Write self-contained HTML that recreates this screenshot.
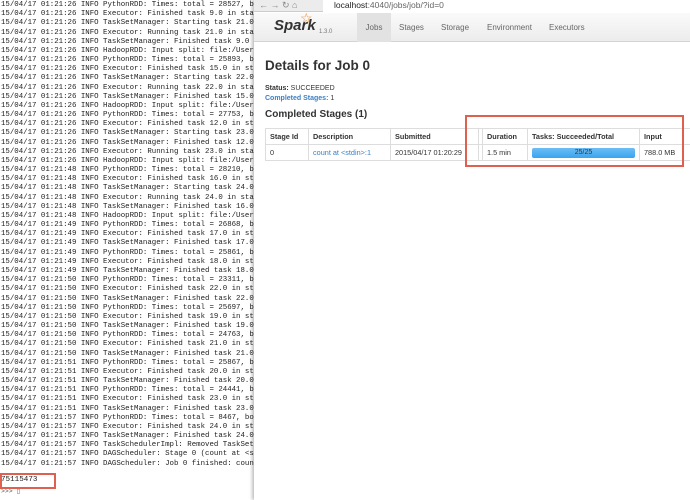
<!DOCTYPE html>
<html><head><meta charset="utf-8"><style>
*{margin:0;padding:0;box-sizing:border-box}
body{width:690px;height:500px;overflow:hidden;background:#fff;position:relative;font-family:"Liberation Sans",sans-serif}
#term{position:absolute;left:0;top:0;width:260px;height:500px;background:#fff;font-family:"Liberation Mono",monospace;font-size:7.4px;line-height:9.18px;color:#222;white-space:pre;overflow:hidden;padding:1px 0 0 1px}
#term div{height:9.18px}
.tl{position:absolute;left:1px;font-family:"Liberation Mono",monospace;font-size:7.6px;color:#222;white-space:pre}
#tbox{position:absolute;left:0;top:473px;width:56px;height:16px;border:2px solid #e06050}
#win{position:absolute;left:254px;top:0;width:436px;height:500px;background:#fff;box-shadow:-2px 0 3px rgba(0,0,0,.25)}
#tool{height:12px;background:#ececec;position:relative;border-bottom:1px solid #ccc}
#addr{position:absolute;left:69px;top:0;width:367px;height:12px;background:#fff;font-size:8.5px;line-height:11px;color:#666;padding-left:11px}
#addr b{color:#222;font-weight:normal}
#nav{position:absolute;top:13px;left:0;right:0;height:29px;background:linear-gradient(#fafafa,#ececec);border-bottom:1px solid #d4d4d4}
.tab{position:absolute;top:0;height:29px;line-height:29px;font-size:8px;color:#666}
#content{position:absolute;top:42px;left:11px;right:0}
h3{position:absolute;top:16px;font-size:13.5px;color:#333;font-weight:bold}
.s{position:absolute;font-size:7px;color:#333}
table{position:absolute;top:86px;left:0;border-collapse:collapse;font-size:7.3px;color:#333;table-layout:fixed;width:430px}
td,th{border:1px solid #ddd;height:16px;padding:0 4px;text-align:left;white-space:nowrap;overflow:hidden}
th{font-weight:bold}
#rbox{position:absolute;left:200px;top:73px;width:219px;height:52px;border:2px solid #e06050}
</style></head><body>
<div id="term"><div>15/04/17 01:21:26 INFO PythonRDD: Times: total = 28527, b</div><div>15/04/17 01:21:26 INFO Executor: Finished task 9.0 in sta</div><div>15/04/17 01:21:26 INFO TaskSetManager: Starting task 21.0</div><div>15/04/17 01:21:26 INFO Executor: Running task 21.0 in sta</div><div>15/04/17 01:21:26 INFO TaskSetManager: Finished task 9.0</div><div>15/04/17 01:21:26 INFO HadoopRDD: Input split: file:/User</div><div>15/04/17 01:21:26 INFO PythonRDD: Times: total = 25893, b</div><div>15/04/17 01:21:26 INFO Executor: Finished task 15.0 in st</div><div>15/04/17 01:21:26 INFO TaskSetManager: Starting task 22.0</div><div>15/04/17 01:21:26 INFO Executor: Running task 22.0 in sta</div><div>15/04/17 01:21:26 INFO TaskSetManager: Finished task 15.0</div><div>15/04/17 01:21:26 INFO HadoopRDD: Input split: file:/User</div><div>15/04/17 01:21:26 INFO PythonRDD: Times: total = 27753, b</div><div>15/04/17 01:21:26 INFO Executor: Finished task 12.0 in st</div><div>15/04/17 01:21:26 INFO TaskSetManager: Starting task 23.0</div><div>15/04/17 01:21:26 INFO TaskSetManager: Finished task 12.0</div><div>15/04/17 01:21:26 INFO Executor: Running task 23.0 in sta</div><div>15/04/17 01:21:26 INFO HadoopRDD: Input split: file:/User</div><div>15/04/17 01:21:48 INFO PythonRDD: Times: total = 28210, b</div><div>15/04/17 01:21:48 INFO Executor: Finished task 16.0 in st</div><div>15/04/17 01:21:48 INFO TaskSetManager: Starting task 24.0</div><div>15/04/17 01:21:48 INFO Executor: Running task 24.0 in sta</div><div>15/04/17 01:21:48 INFO TaskSetManager: Finished task 16.0</div><div>15/04/17 01:21:48 INFO HadoopRDD: Input split: file:/User</div><div>15/04/17 01:21:49 INFO PythonRDD: Times: total = 26868, b</div><div>15/04/17 01:21:49 INFO Executor: Finished task 17.0 in st</div><div>15/04/17 01:21:49 INFO TaskSetManager: Finished task 17.0</div><div>15/04/17 01:21:49 INFO PythonRDD: Times: total = 25861, b</div><div>15/04/17 01:21:49 INFO Executor: Finished task 18.0 in st</div><div>15/04/17 01:21:49 INFO TaskSetManager: Finished task 18.0</div><div>15/04/17 01:21:50 INFO PythonRDD: Times: total = 23311, b</div><div>15/04/17 01:21:50 INFO Executor: Finished task 22.0 in st</div><div>15/04/17 01:21:50 INFO TaskSetManager: Finished task 22.0</div><div>15/04/17 01:21:50 INFO PythonRDD: Times: total = 25697, b</div><div>15/04/17 01:21:50 INFO Executor: Finished task 19.0 in st</div><div>15/04/17 01:21:50 INFO TaskSetManager: Finished task 19.0</div><div>15/04/17 01:21:50 INFO PythonRDD: Times: total = 24763, b</div><div>15/04/17 01:21:50 INFO Executor: Finished task 21.0 in st</div><div>15/04/17 01:21:50 INFO TaskSetManager: Finished task 21.0</div><div>15/04/17 01:21:51 INFO PythonRDD: Times: total = 25867, b</div><div>15/04/17 01:21:51 INFO Executor: Finished task 20.0 in st</div><div>15/04/17 01:21:51 INFO TaskSetManager: Finished task 20.0</div><div>15/04/17 01:21:51 INFO PythonRDD: Times: total = 24441, b</div><div>15/04/17 01:21:51 INFO Executor: Finished task 23.0 in st</div><div>15/04/17 01:21:51 INFO TaskSetManager: Finished task 23.0</div><div>15/04/17 01:21:57 INFO PythonRDD: Times: total = 8467, bo</div><div>15/04/17 01:21:57 INFO Executor: Finished task 24.0 in st</div><div>15/04/17 01:21:57 INFO TaskSetManager: Finished task 24.0</div><div>15/04/17 01:21:57 INFO TaskSchedulerImpl: Removed TaskSet</div><div>15/04/17 01:21:57 INFO DAGScheduler: Stage 0 (count at &lt;s</div><div>15/04/17 01:21:57 INFO DAGScheduler: Job 0 finished: coun</div></div>
<div class="tl" style="top:476px">75115473</div>
<div class="tl" style="top:487px;font-size:6.5px;color:#555">&gt;&gt;&gt; &#9647;</div>
<div id="tbox"></div>
<div id="win">
 <div id="tool"><span style="position:absolute;left:5px;top:0;font-size:9px;color:#888">&#8592; &#8594; &#8635; &#8962;</span><div id="addr"><b>localhost</b>:4040/jobs/job/?id=0</div></div>
 <div id="nav">
  <div style="position:absolute;left:20px;top:4px;font-size:15px;font-style:italic;font-weight:bold;color:#333">Spark</div>
  <div style="position:absolute;left:46px;top:-3px;color:#e8892b;font-size:14px">&#9734;</div>
  <div style="position:absolute;left:65px;top:16px;font-size:6px;color:#777">1.3.0</div>
  <div class="tab" style="left:103px;width:34px;background:#e2e2e2;text-align:center">Jobs</div>
  <div class="tab" style="left:145px">Stages</div>
  <div class="tab" style="left:187px">Storage</div>
  <div class="tab" style="left:233px">Environment</div>
  <div class="tab" style="left:295px">Executors</div>
 </div>
 <div id="content">
  <h3>Details for Job 0</h3>
  <div class="s" style="top:43px"><b>Status:</b> SUCCEEDED</div>
  <div class="s" style="top:53px"><b style="color:#3b7fc4">Completed Stages:</b> 1</div>
  <div style="position:absolute;top:67px;font-size:10px;font-weight:bold;color:#333">Completed Stages (1)</div>
  <table>
   <colgroup><col style="width:43px"><col style="width:82px"><col style="width:88px"><col style="width:4px"><col style="width:45px"><col style="width:112px"><col style="width:44px"><col style="width:12px"></colgroup>
   <tr><th>Stage Id</th><th>Description</th><th>Submitted</th><th style="padding:0"></th><th>Duration</th><th>Tasks: Succeeded/Total</th><th>Input</th><th></th></tr>
   <tr><td>0</td><td style="color:#3b7fc4">count at &lt;stdin&gt;:1</td><td>2015/04/17 01:20:29</td><td style="padding:0"></td><td>1.5 min</td><td><div style="height:10px;background:linear-gradient(#6cbdf5,#3aa4ee);border-radius:2px;text-align:center;font-size:7px;line-height:10px;color:#333">25/25</div></td><td>788.0 MB</td><td></td></tr>
  </table>
  <div id="rbox"></div>
 </div>
</div>
</body></html>
